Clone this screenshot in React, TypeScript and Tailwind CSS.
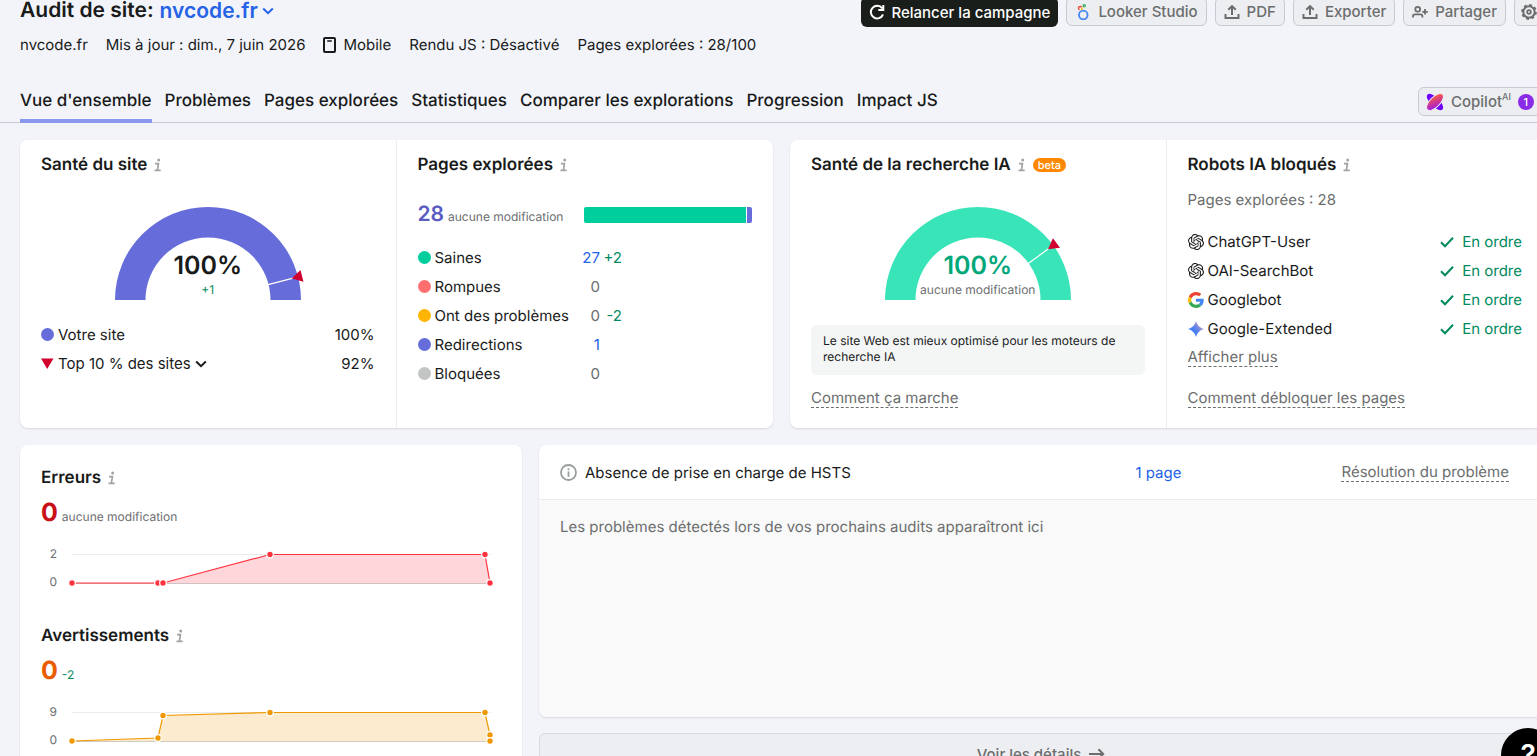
import type { ReactNode } from 'react';
import { SiOpenai } from 'react-icons/si';

const tabs = [
    "Vue d'ensemble",
    'Problèmes',
    'Pages explorées',
    'Statistiques',
    'Comparer les explorations',
    'Progression',
    'Impact JS',
];

const crawled = [
    { label: 'Saines', color: 'bg-[#00ce9c]', value: '27', link: true, delta: '+2' },
    { label: 'Rompues', color: 'bg-[#ff6f70]', value: '0', link: false, delta: '' },
    { label: 'Ont des problèmes', color: 'bg-[#ffb400]', value: '0', link: false, delta: '-2' },
    { label: 'Redirections', color: 'bg-[#666ddb]', value: '1', link: true, delta: '' },
    { label: 'Bloquées', color: 'bg-[#c3c5c5]', value: '0', link: false, delta: '' },
];

const robots = [
    { name: 'ChatGPT-User', icon: <SiOpenai className="size-4" /> },
    { name: 'OAI-SearchBot', icon: <SiOpenai className="size-4" /> },
    { name: 'Googlebot', icon: <GoogleIcon /> },
    { name: 'Google-Extended', icon: <GeminiIcon /> },
];

function GoogleIcon() {
    return (
        <svg viewBox="0 0 48 48" className="size-4">
            <path fill="#ea4335" d="M24 9.5c3.54 0 6.71 1.22 9.21 3.6l6.85-6.85C35.9 2.38 30.47 0 24 0 14.62 0 6.51 5.38 2.56 13.22l7.98 6.19C12.43 13.72 17.74 9.5 24 9.5z" />
            <path fill="#4285f4" d="M46.98 24.55c0-1.57-.15-3.09-.38-4.55H24v9.02h12.94c-.58 2.96-2.26 5.48-4.78 7.18l7.73 6c4.51-4.18 7.09-10.36 7.09-17.65z" />
            <path fill="#fbbc05" d="M10.53 28.59c-.48-1.45-.76-2.99-.76-4.59s.27-3.14.76-4.59l-7.98-6.19C.92 16.46 0 20.12 0 24c0 3.88.92 7.54 2.56 10.78l7.97-6.19z" />
            <path fill="#34a853" d="M24 48c6.48 0 11.93-2.13 15.89-5.81l-7.73-6c-2.15 1.45-4.92 2.3-8.16 2.3-6.26 0-11.57-4.22-13.47-9.91l-7.98 6.19C6.51 42.62 14.62 48 24 48z" />
        </svg>
    );
}

function GeminiIcon() {
    return (
        <svg viewBox="0 0 16 16" className="size-4">
            <defs>
                <linearGradient id="gemini" x1="0" y1="1" x2="1" y2="0.1">
                    <stop offset="0.1" stopColor="#1c7dff" />
                    <stop offset="0.5" stopColor="#5a80ee" />
                    <stop offset="1" stopColor="#d8a0b8" />
                </linearGradient>
            </defs>
            <path fill="url(#gemini)" d="M8 0c1 4 4 7 8 8-4 1-7 4-8 8-1-4-4-7-8-8 4-1 7-4 8-8z" />
        </svg>
    );
}

function InfoIcon() {
    return (
        <svg viewBox="0 0 8 14" className="h-[14px] w-2 shrink-0" fill="none" stroke="#a0a3a3" strokeWidth="1.7">
            <circle cx="4.7" cy="2" r="1.5" fill="#a0a3a3" stroke="none" />
            <path d="M1 5.7h3.4L3.4 12.2M0.5 12.4h6.2" />
        </svg>
    );
}

function UploadIcon() {
    return (
        <svg viewBox="0 0 16 16" className="size-4" fill="none" stroke="currentColor" strokeWidth="2">
            <path d="M8 11V2.5M4.3 5.8 8 2.1l3.7 3.7M1.5 10v4h13v-4" />
        </svg>
    );
}

function ChevronIcon() {
    return (
        <svg viewBox="0 0 12 8" className="h-2 w-3" fill="none" stroke="currentColor" strokeWidth="2">
            <path d="m1.2 1.5 4.8 4.7 4.8-4.7" />
        </svg>
    );
}

function ToolButton({ icon, children }: { icon: ReactNode; children?: ReactNode }) {
    return (
        <button className="flex h-[29px] items-center gap-[7px] rounded-md border border-[#c8cad1] bg-[#edeef2] px-2 font-medium text-[#6c6e6e]">
            {icon}
            {children}
        </button>
    );
}

function Title({ children, extra }: { children: ReactNode; extra?: ReactNode }) {
    return (
        <h2 className="flex h-6 items-center gap-[7px] text-[17px] font-semibold">
            {children}
            <InfoIcon />
            {extra}
        </h2>
    );
}

function DashedLink({ children }: { children: ReactNode }) {
    return (
        <a href="#" className="inline-block border-b border-dashed border-[#6c6e6e] leading-[18px] text-[#6c6e6e]">
            {children}
        </a>
    );
}

interface GaugeProps {
    color: string;
    // percentage at which the marker sits
    mark: number;
    children: ReactNode;
}

function Gauge({ color, mark, children }: GaugeProps) {
    return (
        <div className="relative mx-auto mt-[23px] w-[200px]">
            <svg viewBox="-100 -100 200 100" className="block w-full">
                <path d="M-93 0A93 93 0 0 1 93 0H62.5A62.5 62.5 0 0 0-62.5 0z" fill={color} />
                <g transform={`rotate(${-180 * (1 - mark / 100)})`}>
                    <path d="M60 0h30" stroke="#fff" strokeWidth="1.2" />
                    <path d="M86.5 0l10.5-6v12z" fill="#d1002f" />
                </g>
            </svg>
            <div className="absolute inset-x-0 bottom-0 text-center">{children}</div>
        </div>
    );
}

interface TrendProps {
    title: string;
    value: string;
    valueClass: string;
    delta: string;
    deltaClass: string;
    max: string;
    stroke: string;
    fill: string;
    points: [number, number][];
}

function Trend({ title, value, valueClass, delta, deltaClass, max, stroke, fill, points }: TrendProps) {
    const line = points.map((p) => p.join(',')).join(' ');
    return (
        <section className="h-[158px]">
            <Title>{title}</Title>
            <div className="mt-[7px] flex items-baseline gap-1">
                <span className={`text-[25px] leading-8 font-bold ${valueClass}`}>{value}</span>
                <span className={`text-xs ${deltaClass}`}>{delta}</span>
            </div>
            <div className="mt-[17px] flex">
                <div className="flex w-4 flex-col gap-3 text-right text-xs leading-4 text-[#6c6e6e]">
                    <span>{max}</span>
                    <span>0</span>
                </div>
                <svg viewBox="0 0 444 46" className="block min-w-0 flex-1">
                    <path d="M15 8.5H434M15 37.5H434" stroke="#eaebeb" />
                    <polygon points={`15,37.5 ${line} 434,37.5`} fill={fill} />
                    <path d="M15 37.5H434" stroke="#666" strokeOpacity="0.25" />
                    <polyline points={line} fill="none" stroke={stroke} strokeWidth="1.2" />
                    {points.map(([x, y]) => (
                        <circle key={`${x}-${y}`} cx={x} cy={y} r="3.3" fill={stroke} stroke="#fff" strokeWidth="1.2" />
                    ))}
                </svg>
            </div>
        </section>
    );
}

export default function App() {
    return (
        <div className="h-screen overflow-hidden bg-[#f3f4f9] font-['Inter',sans-serif] text-[15px] leading-[21px] text-[#191b1b] [text-rendering:geometricPrecision]">
            {/* the report is slightly wider than the viewport */}
            <div className="w-[calc(100%+26px)]">
                <header className="border-b border-[#c8cad1]">
                    <div className="-mt-[3px] flex h-[30px] items-start justify-between px-5">
                        <h1 className="flex items-center gap-[6px] text-[21px] leading-7 font-semibold">
                            Audit de site:
                            <button className="flex items-center gap-1 text-[#2663e6]">
                                nvcode.fr
                                <ChevronIcon />
                            </button>
                        </h1>
                        <div className="flex gap-2">
                            <button className="flex h-[30px] items-center gap-[6px] rounded-md bg-[#191e1a] px-2 font-medium text-white">
                                <svg viewBox="0 0 16 16" className="size-4" fill="none" stroke="currentColor" strokeWidth="2">
                                    <path d="M14 10.5A6.3 6.3 0 1 1 13.2 4.3M14.3 1v5H9.3" />
                                </svg>
                                Relancer la campagne
                            </button>
                            <ToolButton
                                icon={
                                    <svg viewBox="0 0 16 16" className="size-4" fill="none">
                                        <circle cx="8.3" cy="11" r="4.3" stroke="#4285f4" strokeWidth="1.8" />
                                        <path d="M4.6 5.8A1.7 1.7 0 1 1 6.7 3.5" stroke="#ea4335" strokeWidth="1.3" />
                                        <path d="M6.9 3.7 6.5 6" stroke="#fbbc04" strokeWidth="1.5" />
                                        <circle cx="9.2" cy="1.7" r="1.1" stroke="#34a853" strokeWidth="1.2" />
                                    </svg>
                                }
                            >
                                Looker Studio
                            </ToolButton>
                            <ToolButton icon={<UploadIcon />}>PDF</ToolButton>
                            <ToolButton icon={<UploadIcon />}>Exporter</ToolButton>
                            <ToolButton
                                icon={
                                    <svg viewBox="0 0 16 16" className="size-4" fill="none" stroke="currentColor" strokeWidth="1.8">
                                        <circle cx="5.7" cy="5.3" r="2.4" />
                                        <path d="M1 13.5v-1.2c0-1.1.8-1.9 1.9-1.9h5.6c1.1 0 1.9.8 1.9 1.9v1.2M13 5v5.6M10.2 7.8h5.6" />
                                    </svg>
                                }
                            >
                                Partager
                            </ToolButton>
                            <button
                                aria-label="Paramètres"
                                className="flex size-[29px] items-center justify-center rounded-md border border-[#c8cad1] bg-[#edeef2] text-[#6c6e6e]"
                            >
                                <svg viewBox="0 0 16 16" className="size-4" fill="none" stroke="currentColor">
                                    <circle cx="8" cy="8" r="5.7" strokeWidth="2" />
                                    <circle cx="8" cy="8" r="7" strokeWidth="1.8" strokeDasharray="2.8 2.698" />
                                    <circle cx="8" cy="8" r="1.8" strokeWidth="1.8" />
                                </svg>
                            </button>
                        </div>
                    </div>
                    <div className="mt-[7px] flex gap-[18px] px-5">
                        <span>nvcode.fr</span>
                        <span>Mis à jour : dim., 7 juin 2026</span>
                        <span className="flex items-center gap-[6px]">
                            <svg viewBox="0 0 14 16" className="h-4 w-[14px]" fill="none" stroke="currentColor" strokeWidth="2">
                                <rect x="1" y="1" width="11" height="14" rx="1" />
                                <path d="M4.2 4h4.6" strokeWidth="1.5" />
                            </svg>
                            Mobile
                        </span>
                        <span>Rendu JS : Désactivé</span>
                        <span>Pages explorées : 28/100</span>
                    </div>
                    <div className="mt-8 flex items-start justify-between px-5">
                        <nav className="-mb-px flex h-9 gap-[13px] text-[17px] leading-[29px] font-medium">
                            {tabs.map((tab, i) => (
                                <a
                                    key={tab}
                                    href="#"
                                    className={i === 0 ? 'border-b-4 border-[#8b98ef]' : ''}
                                >
                                    {tab}
                                </a>
                            ))}
                        </nav>
                        <button className="flex h-[29px] w-[125px] items-center gap-[7px] rounded-md border border-[#c8cad1] bg-[#edeef2] px-[7px] font-medium text-[#6c6e6e]">
                            <svg viewBox="0 0 18 18" className="size-[18px]">
                                <defs>
                                    <linearGradient id="copilot" x1="1" y1="0" x2="0" y2="1">
                                        <stop offset="0.15" stopColor="#ff5a3c" />
                                        <stop offset="0.85" stopColor="#a01be0" />
                                    </linearGradient>
                                </defs>
                                <ellipse cx="9" cy="9" rx="10.5" ry="4.6" transform="rotate(45 9 9)" fill="#6f00ff" />
                                <ellipse cx="9" cy="9" rx="10.8" ry="5" transform="rotate(-45 9 9)" fill="url(#copilot)" stroke="#edeef2" />
                            </svg>
                            <span>
                                Copilot<sup className="-top-[7px] text-[9px]">AI</sup>
                            </span>
                            <span className="size-4 shrink-0 rounded-full bg-[#8a2be8] text-center text-[11px] leading-4 text-white">1</span>
                        </button>
                    </div>
                </header>

                <main className="flex flex-col gap-[17px] px-5 pt-[17px]">
                    <div className="grid grid-cols-2 gap-[17px]">
                        <div className="grid h-[288px] grid-cols-2 divide-x divide-[#ebecec] rounded-lg bg-white shadow-[0_1px_2px_rgba(25,27,35,0.12)]">
                            <section className="px-[21px] pt-[13px]">
                                <Title>Santé du site</Title>
                                <Gauge color="#666ddb" mark={92}>
                                    <div className="text-[25px] leading-7 font-semibold">100%</div>
                                    <div className="text-xs leading-5 text-[#008a5e]">+1</div>
                                </Gauge>
                                <dl className="mt-6 flex flex-col gap-2">
                                    <div className="flex items-center gap-1">
                                        <dt className="flex flex-1 items-center gap-1">
                                            <span className="size-[13px] rounded-full bg-[#666ddb]" />
                                            Votre site
                                        </dt>
                                        <dd>100%</dd>
                                    </div>
                                    <div className="flex items-center gap-1">
                                        <dt className="flex flex-1 items-center gap-1">
                                            <svg viewBox="0 0 13 11" className="h-[11px] w-[13px]">
                                                <path d="M0 0.5h12.5L6.2 11z" fill="#d1002f" />
                                            </svg>
                                            <button className="flex items-center gap-1">
                                                Top 10 % des sites
                                                <ChevronIcon />
                                            </button>
                                        </dt>
                                        <dd>92%</dd>
                                    </div>
                                </dl>
                            </section>
                            <section className="px-[21px] pt-[13px]">
                                <Title>Pages explorées</Title>
                                <div className="mt-[26px] flex h-6 items-center gap-[21px]">
                                    <div className="flex items-baseline gap-1">
                                        <span className="text-[21px] leading-6 font-semibold text-[#5b5bc4]">28</span>
                                        <span className="text-xs text-[#6c6e6e]">aucune modification</span>
                                    </div>
                                    <div className="flex h-4 flex-1 gap-px overflow-hidden rounded-xs">
                                        <span className="flex-1 bg-[#00ce9c]" />
                                        <span className="w-[5px] bg-[#666ddb]" />
                                    </div>
                                </div>
                                <table className="mt-4">
                                    <tbody>
                                        {crawled.map((row) => (
                                            <tr key={row.label} className="h-[29px]">
                                                <th className="w-[148px] p-0 text-left font-normal">
                                                    <span className="flex items-center gap-1 whitespace-nowrap">
                                                        <span className={`size-[13px] rounded-full ${row.color}`} />
                                                        {row.label}
                                                    </span>
                                                </th>
                                                <td className="w-[31px] p-0 text-right text-[#6c6e6e]">
                                                    {row.link ? <a href="#" className="text-[#2663e6]">{row.value}</a> : row.value}
                                                </td>
                                                <td className="w-[22px] p-0 text-right text-[#008a5e]">{row.delta}</td>
                                            </tr>
                                        ))}
                                    </tbody>
                                </table>
                            </section>
                        </div>

                        <div className="grid h-[288px] grid-cols-2 divide-x divide-[#ebecec] rounded-lg bg-white shadow-[0_1px_2px_rgba(25,27,35,0.12)]">
                            <section className="px-[21px] pt-[13px]">
                                <Title
                                    extra={
                                        <span className="rounded-full bg-[#ff8800] px-[5px] text-[11px] leading-[14px] font-medium text-white">
                                            beta
                                        </span>
                                    }
                                >
                                    Santé de la recherche IA
                                </Title>
                                <Gauge color="#39e5b8" mark={80}>
                                    <div className="text-[25px] leading-7 font-semibold text-[#00a77b]">100%</div>
                                    <div className="text-xs leading-5 text-[#6c6e6e]">aucune modification</div>
                                </Gauge>
                                <p className="mt-[25px] rounded-md bg-[#f4f5f5] px-3 pt-2 pb-[10px] text-xs">
                                    Le site Web est mieux optimisé pour les moteurs de recherche IA
                                </p>
                                <div className="mt-3">
                                    <DashedLink>Comment ça marche</DashedLink>
                                </div>
                            </section>
                            <section className="px-[21px] pt-[13px]">
                                <Title>Robots IA bloqués</Title>
                                <p className="mt-3 text-[#6c6e6e]">Pages explorées : 28</p>
                                <ul className="mt-[21px] flex flex-col gap-2">
                                    {robots.map((robot) => (
                                        <li key={robot.name} className="flex items-center justify-between">
                                            <span className="flex items-center gap-1">
                                                {robot.icon}
                                                {robot.name}
                                            </span>
                                            <span className="flex items-center gap-2 text-[#008a5e]">
                                                <svg viewBox="0 0 14 12" className="h-3 w-[14px]" fill="none" stroke="currentColor" strokeWidth="2">
                                                    <path d="m1 6.3 4 4 8-8.5" />
                                                </svg>
                                                En ordre
                                            </span>
                                        </li>
                                    ))}
                                </ul>
                                <div className="mt-[9px] flex flex-col items-start gap-[22px]">
                                    <DashedLink>Afficher plus</DashedLink>
                                    <DashedLink>Comment débloquer les pages</DashedLink>
                                </div>
                            </section>
                        </div>
                    </div>

                    <div className="grid grid-cols-[1fr_2fr] gap-[17px]">
                        <div className="rounded-lg bg-white px-[21px] pt-[21px] shadow-[0_1px_2px_rgba(25,27,35,0.12)]">
                            <Trend
                                title="Erreurs"
                                value="0"
                                valueClass="text-[#c91016]"
                                delta="aucune modification"
                                deltaClass="text-[#6c6e6e]"
                                max="2"
                                stroke="#ff3340"
                                fill="#ffd7da"
                                points={[[15, 37], [101, 37], [106, 37], [213, 8.5], [428, 8.5], [433, 37]]}
                            />
                            <Trend
                                title="Avertissements"
                                value="0"
                                valueClass="text-[#e95c00]"
                                delta="-2"
                                deltaClass="text-[#008a5e]"
                                max="9"
                                stroke="#ef9800"
                                fill="#fcebcf"
                                points={[[15, 37], [101, 34], [106, 11.5], [213, 8.5], [428, 8.5], [433, 31], [433, 37]]}
                            />
                        </div>
                        <div>
                            <div className="overflow-hidden rounded-lg bg-white shadow-[0_1px_2px_rgba(25,27,35,0.12)]">
                                <div className="grid h-[55px] grid-cols-[576fr_374fr] items-center border-b border-[#ebecec] pr-[34px] pl-[21px]">
                                    <span className="flex items-center gap-2">
                                        <svg viewBox="0 0 17 17" className="size-[17px]" fill="none" stroke="#9a9d9d" strokeWidth="1.8">
                                            <circle cx="8.5" cy="8.5" r="7.5" />
                                            <path d="M8.5 7.5v5.2M8.5 4.4v1.9" />
                                        </svg>
                                        Absence de prise en charge de HSTS
                                    </span>
                                    <span className="flex items-center justify-between">
                                        <a href="#" className="text-[#2663e6]">1 page</a>
                                        <DashedLink>Résolution du problème</DashedLink>
                                    </span>
                                </div>
                                <p className="h-[217px] bg-[#f9f9f9] px-[21px] pt-4 text-[#6c6e6e]">
                                    Les problèmes détectés lors de vos prochains audits apparaîtront ici
                                </p>
                            </div>
                            <button className="mt-4 flex h-[42px] w-full items-center justify-center gap-2 rounded-md border border-[#d8dadf] bg-[#edeef2] font-medium text-[#6c6e6e]">
                                Voir les détails
                                <svg viewBox="0 0 16 12" className="h-3 w-4" fill="none" stroke="currentColor" strokeWidth="2">
                                    <path d="M0 6h14M9.5 1.3 14.2 6l-4.7 4.7" />
                                </svg>
                            </button>
                        </div>
                    </div>
                </main>
            </div>
            <button className="fixed -right-[18px] -bottom-[26px] size-[54px] rounded-full bg-black text-[28px] font-semibold text-white">
                ?
            </button>
        </div>
    );
}
